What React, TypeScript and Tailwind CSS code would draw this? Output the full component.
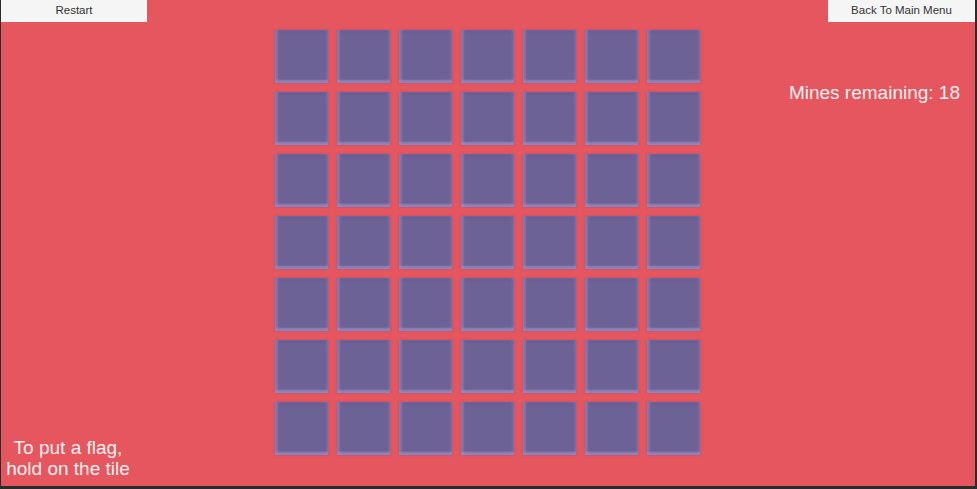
const ROWS = 7;
const COLS = 7;

function Tile() {
	return (
		<div className="w-[53px] h-[53px] bg-[#6d6295] shadow-[inset_3px_0_2px_rgba(150,140,195,0.5),inset_0_-3px_2px_rgba(165,155,210,0.6),inset_-3px_0_2px_rgba(120,108,165,0.5),inset_0_3px_2px_rgba(105,90,140,0.45),0_0_2px_rgba(110,90,140,0.6)]" />
	);
}

function MenuButton({ label, className }: { label: string; className?: string }) {
	return (
		<button
			className={`h-[22px] bg-[#f5f5f5] text-[#333] text-[11.5px] leading-none font-['Liberation_Sans',Arial,sans-serif] ${className ?? ''}`}
		>
			{label}
		</button>
	);
}

export default function App() {
	const tiles = Array.from({ length: ROWS * COLS }, (_, i) => i);

	return (
		<div className="w-[977px] h-[489px] bg-[#e5565e] border-l border-r-2 border-b-[3px] border-[#2b2b2b] flex font-['Liberation_Sans',Arial,sans-serif] text-[#fdf1f1] overflow-hidden">
			{/* left column */}
			<div className="w-[274px] flex flex-col justify-between">
				<MenuButton label="Restart" className="w-[146px]" />
				<div className="w-[134px] text-center text-[19px] leading-[21px] pb-[7px]">
					To put a flag,
					<br />
					hold on the tile
				</div>
			</div>

			{/* board */}
			<div className="pt-[30px]">
				<div className="grid grid-cols-[repeat(7,53px)] gap-[9px]">
					{tiles.map((i) => (
						<Tile key={i} />
					))}
				</div>
			</div>

			{/* right column */}
			<div className="flex-1 flex flex-col items-end">
				<MenuButton label="Back To Main Menu" className="w-[147px]" />
				<div className="mt-[60px] pr-[15px] text-[19px] leading-[22px]">
					Mines remaining: 18
				</div>
			</div>
		</div>
	);
}
